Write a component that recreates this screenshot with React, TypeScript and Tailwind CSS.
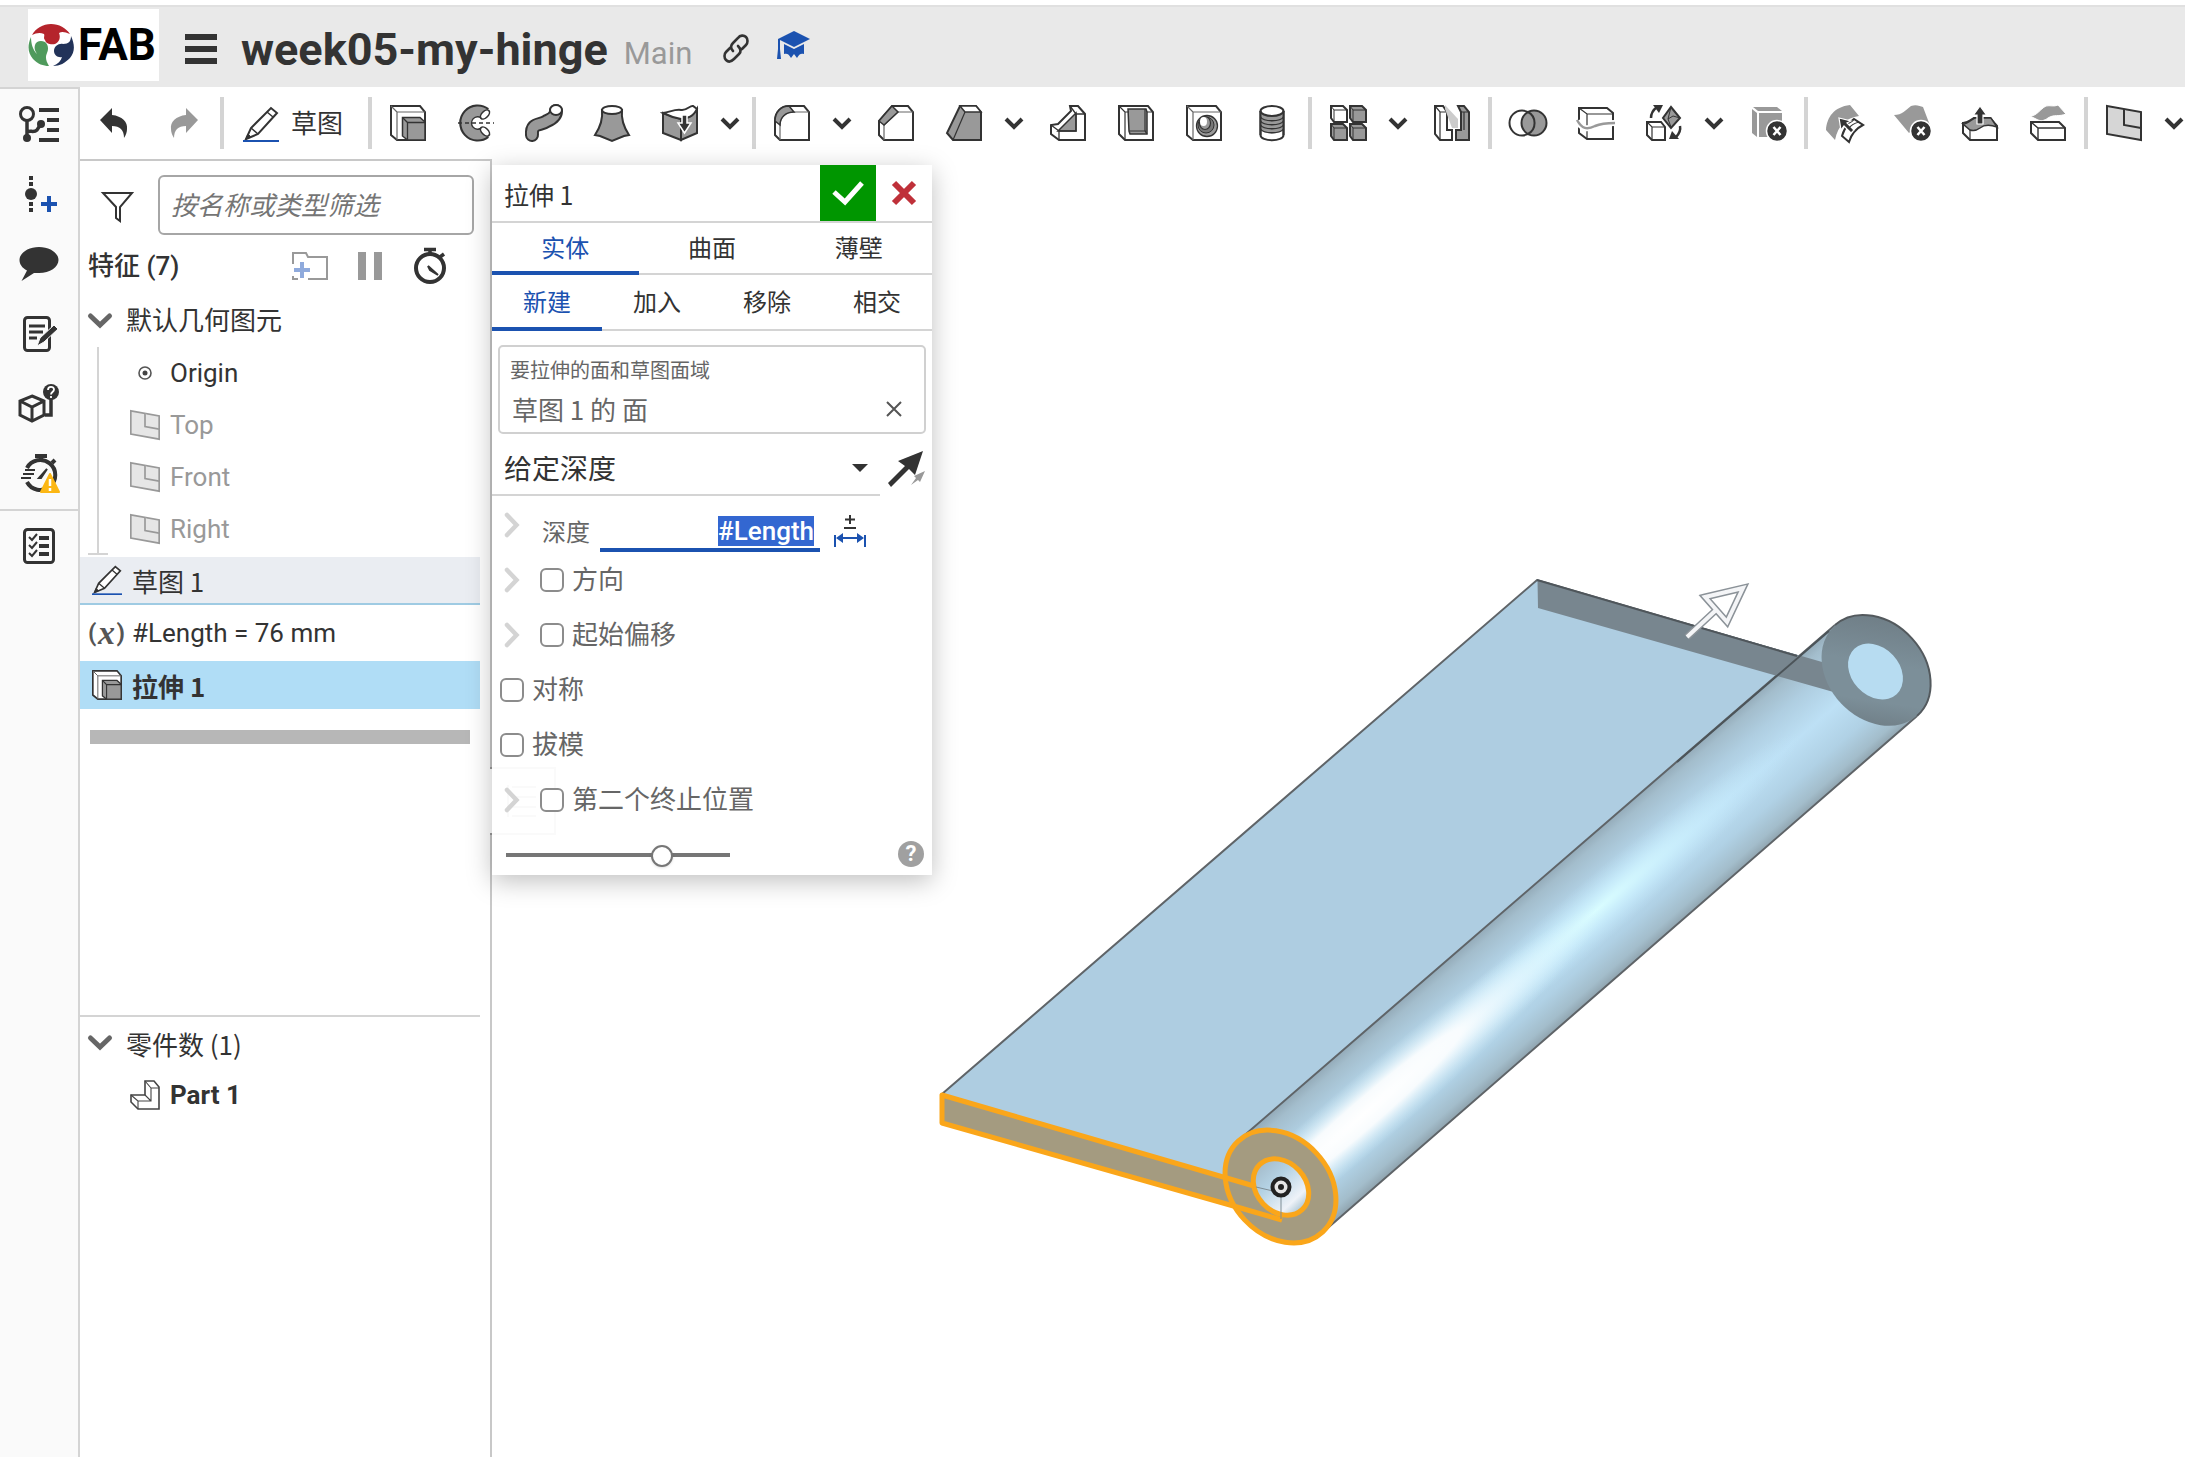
import React, { useEffect, useRef, useState } from 'react';

const DARK = '#333333';
const GREY = '#999999';
const BLUE = '#1b52b0';

interface IconProps {
  children: React.ReactNode;
  className?: string;
  box?: string;
}

const Icon = ({ children, className = 'h-9 w-9', box = '0 0 36 36' }: IconProps) => (
  <svg
    className={`shrink-0 overflow-visible ${className}`}
    viewBox={box}
    fill="none"
    stroke={DARK}
    strokeWidth={2}
    aria-hidden="true"
  >
    {children}
  </svg>
);

/* ---------- Toolbar icons ---------- */

const PencilIcon = ({ className }: { className?: string }) => (
  <Icon className={className}>
    <path d="M3 33 8 22 28 2l6 5-19 21z" fill="#fff" />
    <path d="m8 22 7 6M24 6l6 5" strokeWidth={1.5} />
    <path d="m3 33 5-2-3-3z" fill={DARK} strokeWidth={1} />
    <path d="M0 35h36" stroke={BLUE} />
  </Icon>
);

const ExtrudeIcon = ({ className }: { className?: string }) => (
  <Icon className={className}>
    <path d="M1 1h29l5 6v28H7l-6-5z" fill="#fff" />
    <path d="m1 1 6 6v28M7 7h28" stroke="#666" strokeWidth={1.2} />
    <path d="M12.500 12.500H30l5 4.500v18H17.500l-5-4z" fill={GREY} strokeWidth={1.5} />
    <path d="m12.500 12.500 5 5h17.500M17.500 17.500V35" strokeWidth={1.3} />
  </Icon>
);

const RevolveIcon = () => (
  <Icon>
    <path d="M27 8.500A12 12 0 1 0 27 27.500" stroke={DARK} strokeWidth={13} />
    <path d="M27.500 9A11.800 11.800 0 1 0 27.500 27" stroke={GREY} strokeWidth={9.500} />
    <ellipse cx="27" cy="9.500" rx="5.500" ry="3.200" fill="#fff" transform="rotate(-45 27 9.500)" strokeWidth={1.6} />
    <ellipse cx="27" cy="26.500" rx="5.500" ry="3.200" fill="#fff" transform="rotate(45 27 26.500)" strokeWidth={1.6} />
    <path d="M0 18h36" strokeWidth={1.6} strokeDasharray="4 3" />
  </Icon>
);

const SweepIcon = () => (
  <Icon>
    <path d="M6 30C5 17 14 21 21 16c7-3 9-6 9-10" stroke={DARK} strokeWidth={14} strokeLinecap="round" />
    <path d="M6 30C5 17 14 21 21 16c7-3 9-6 9-10" stroke={GREY} strokeWidth={10} strokeLinecap="round" />
    <ellipse cx="30" cy="5" rx="6" ry="5" fill="#fff" />
  </Icon>
);

const LoftIcon = () => (
  <Icon>
    <path d="M8 5c1 9-1 16-7 25l5 1 12 5 12-5 5-1c-6-9-8-16-7-25z" fill={GREY} />
    <ellipse cx="18" cy="5" rx="10" ry="4" fill="#fff" />
  </Icon>
);

const ThickenIcon = () => (
  <Icon>
    <path d="M1 8v20l18 7V14z" fill={GREY} />
    <path d="M19 14v21l16-7V4c-4 7-9 9-16 10z" fill={GREY} />
    <path d="M1 8C8 7 13 4 19 5s9-5 12-4l4 3c-4 8-9 9-16 10C13 13 7 11 1 8z" fill="#fff" />
    <path d="M20 10h5v8h4l-6.500 10L16 18h4z" fill={DARK} stroke="#fff" strokeWidth={1.5} />
  </Icon>
);

const FilletIcon = () => (
  <Icon>
    <path d="M1 16C1 7 7 1 15 1h15l5 6v28H6l-5-5z" fill="#fff" />
    <path d="M35 7H20C12 7 6 12 6 20v15" strokeWidth={1.2} stroke="#666" />
    <path d="M1 16C1 7 7 1 15 1l5 6C12 7 6 12 6 20z" fill={GREY} strokeWidth={1.5} />
  </Icon>
);

const ChamferIcon = () => (
  <Icon>
    <path d="M1 16 14 1h16l5 6v28H6l-5-5z" fill="#fff" />
    <path d="M35 7H20L6 20v15" strokeWidth={1.2} stroke="#666" />
    <path d="m1 16 13-15 6 6L6 20z" fill={GREY} strokeWidth={1.5} />
  </Icon>
);

const DraftIcon = () => (
  <Icon>
    <path d="M14 1h16l5 6v28H7l-6-7z" fill={GREY} />
    <path d="M14 1h16l5 6H19z" fill="#fff" strokeWidth={1.5} />
    <path d="M19 7 7 35" strokeWidth={1.2} />
  </Icon>
);

const RibIcon = () => (
  <Icon>
    <path d="M20 1h8l7 8v26H9l-8-6v-9l7-1 13-13z" fill="#fff" />
    <path d="M8 26 26 8v18z" fill={GREY} strokeWidth={1.5} />
    <path d="m20 1 6 8h9M26 9v17H9v9M9 26l-8-6" strokeWidth={1.3} />
  </Icon>
);

const ShellIcon = () => (
  <Icon>
    <path d="M1 1h29l5 6v28H7l-6-6z" fill="#fff" />
    <path d="M10 4h18l1 3v22H12l-1-3z" fill={GREY} strokeWidth={1.5} />
    <path d="m1 1 6 6v28M7 7h4M29 7h6M11 26h17M29 29l-2-3V4" strokeWidth={1.2} />
  </Icon>
);

const HoleIcon = () => (
  <Icon>
    <path d="M1 1h29l5 6v28H7l-6-5z" fill="#fff" />
    <path d="m1 1 6 6v28M7 7h28" stroke="#666" strokeWidth={1.2} />
    <circle cx="21" cy="21" r="10.500" fill={GREY} strokeWidth={1.3} />
    <circle cx="20" cy="20" r="8" fill="#777" strokeWidth={1} />
    <ellipse cx="19" cy="18" rx="5.500" ry="6.500" fill={GREY} strokeWidth={1.2} />
    <ellipse cx="17.500" cy="16.500" rx="3.500" ry="4.500" fill="#fff" stroke="none" />
  </Icon>
);

const ThreadIcon = () => (
  <Icon>
    <path d="M6.500 6v24c0 7 23 7 23 0V6" fill="#fff" />
    <path d="M6.500 8v16c3 6 20 6 23 0V8c-3 4-20 4-23 0z" fill={GREY} stroke="none" />
    <path d="M6.500 12c3 5 20 5 23 0M6.500 16c3 5 20 5 23 0M6.500 20c3 5 20 5 23 0M6.500 24c3 5 20 5 23 0" strokeWidth={1.4} />
    <ellipse cx="18" cy="6" rx="11.500" ry="5" fill="#fff" />
    <path d="M6.500 6v24M29.500 6v24" />
  </Icon>
);

const patternCells = [
  { x: 0, y: 0, fill: '#fff' },
  { x: 19, y: 0, fill: GREY },
  { x: 0, y: 18, fill: GREY },
  { x: 19, y: 18, fill: GREY },
];

const PatternIcon = () => (
  <Icon>
    {patternCells.map(({ x, y, fill }) => (
      <g key={`${x}-${y}`} transform={`translate(${x} ${y})`}>
        <path d="M1 1h12l4 4v12H4l-3-4z" fill={fill} strokeWidth={2} />
        <path d="m1 1 3 4v12M4 5h13" strokeWidth={1} />
      </g>
    ))}
  </Icon>
);

const MirrorIcon = () => (
  <Icon>
    <path d="M1 1h8l4 6v18h5v10H6l-5-6z" fill="#fff" />
    <path d="m1 1 5 6h7M6 7v28" strokeWidth={1.2} />
    <path d="M11 0v4l7 19h6V14z" fill="#ccc" stroke="none" />
    <path d="M24 1h6l5 6v28H22V25h5V7z" fill={GREY} />
    <path d="M27 7h8M30 7v18" strokeWidth={1.2} />
  </Icon>
);

const BooleanIcon = () => (
  <Icon>
    <circle cx="12" cy="18" r="12.500" fill="#fff" />
    <circle cx="24" cy="18" r="12.500" fill={GREY} />
    <path d="M18 7a12.500 12.500 0 0 1 0 22" />
  </Icon>
);

const SplitIcon = () => (
  <Icon>
    <path d="M1 3h28l6 5v26H9l-8-6z" fill="#fff" />
    <path d="m1 3 8 6h26M9 9v25" strokeWidth={1.2} />
    <path d="M-1 16c5 8 10 9 18 5 7-3 12-3 20-3" stroke="#fff" strokeWidth={6} />
    <path d="M-1 15c5 9 10 10 18 6 7-3 12-3 20-3" stroke={GREY} strokeWidth={2.5} />
  </Icon>
);

const TransformIcon = () => (
  <Icon>
    <path d="M1 17h14l4 5v13H6l-5-5z" fill="#fff" />
    <path d="m1 17 5 5h13M6 22v13" strokeWidth={1.2} />
    <path d="m25 2 9 11-9 10-8-10z" fill={GREY} />
    <path d="m25 2-3 12 3 8M22 14l5-3 7 2" strokeWidth={1} />
    <path d="M5 13c0-5 2-8 6-11M34 21c1 5-1 8-4 11" strokeWidth={2.5} />
    <path d="M7 0h10l-4 8zM23 34l3-8 7 8z" fill={DARK} stroke="none" />
  </Icon>
);

const CrossBadge = () => (
  <>
    <circle cx="27" cy="26" r="10.500" fill={DARK} stroke="#fff" strokeWidth={1.5} />
    <path d="m23.500 22 7 8M30.500 22l-7 8" stroke="#fff" strokeWidth={2.5} />
  </>
);

const DeleteSolidIcon = () => (
  <Icon>
    <path d="M3 2h24l5 4H8zM2 4l5 4v24l-5-4zM9 8h23v24H9z" fill={GREY} stroke="none" />
    <CrossBadge />
  </Icon>
);

const MoveFaceIcon = () => (
  <Icon>
    <path d="M0 25C1 12 8 2 24 0l9 11C20 13 12 20 9 35z" fill={GREY} stroke="none" />
    <path d="M16 20c6-1 9-3 12-6l9 6c-6 3-11 7-14 17l-7-6c1-4 3-8 6-11" fill="#fff" />
    <path d="m13 13 12 3-4 2 7 7-3 3-7-7-3 4z" fill={DARK} stroke="#fff" strokeWidth={1.2} />
    <path d="M22 24c3-4 7-6 11-7" strokeWidth={1.2} />
  </Icon>
);

const DeleteFaceIcon = () => (
  <Icon>
    <path d="M0 10C8 10 12 5 17 1c5-2 9 0 12 1l8 21-13-3-9 8z" fill={GREY} stroke="none" />
    <CrossBadge />
  </Icon>
);

const OffsetFaceIcon = () => (
  <Icon>
    <path d="M1 18c5 0 7-3 11-5h16l7 8v14H8l-7-7z" fill="#fff" />
    <path d="M1 19c5 0 9-5 12-6h16l6 9c-6-2-12-3-17 1-4 3-7 3-10 2z" fill={GREY} strokeWidth={1.5} />
    <path d="M8 25v10" strokeWidth={1.2} />
    <path d="M15 19V10h-3.500L18 1l6.500 9H21v9z" fill={DARK} stroke="#fff" strokeWidth={1.2} />
  </Icon>
);

const ReplaceFaceIcon = () => (
  <Icon>
    <path d="M1 17h28l6 6v12H8l-7-7z" fill="#fff" />
    <path d="m1 17 7 6h27M8 23v12" strokeWidth={1.4} />
    <path d="M0 11C7 11 10 4 16 1c4-1 8 1 12-1l8 9c-7 3-12 0-18 4-4 3-7 3-10 2z" fill={GREY} stroke="#fff" strokeWidth={1} />
  </Icon>
);

const PlaneIcon = ({ className, muted }: { className?: string; muted?: boolean }) => (
  <Icon className={className}>
    <g stroke={muted ? GREY : DARK} fill={muted ? '#e6e6e6' : '#d6d6d6'}>
      <path d="m1 1 34 6v28L1 29z" />
      <path d="M18 4v16l17 3" />
    </g>
  </Icon>
);

const UndoIcon = ({ flipped }: { flipped?: boolean }) => (
  <Icon className={flipped ? 'h-[30px] w-7 -scale-x-100' : 'h-[30px] w-7'} box="0 0 28 30">
    <path
      d="M0 12 12 0v7c10 1 16 7 15 14 0 3-1 6-3 9 0-8-4-12-12-12v7z"
      fill={flipped ? GREY : DARK}
      stroke="none"
    />
  </Icon>
);

const ChevronDown = () => (
  <Icon className="h-3 w-5" box="0 0 20 12">
    <path d="m2 2 8 8 8-8" strokeWidth={4} />
  </Icon>
);

/* ---------- Header ---------- */

const FabLogo = () => (
  <a href="#home" className="flex h-[72px] w-[131px] items-center gap-1 bg-white" aria-label="FAB">
    <svg className="h-[44px] w-[46px] shrink-0" viewBox="0 0 46 42" aria-hidden="true">
      <path d="M4 11C8 4 15 0 23 0s15 4 19 10c-5-2-8-3-11-1 2 5 0 9-4 11-4 1-9 0-10-4-2-2 0-4-1-6-4-2-8-1-12 1z" fill="#b5242c" />
      <path d="M3 13c-4 9-3 16 2 22 5 5 10 7 16 7-3-5-4-9-2-13 2-4 1-9-2-11-4-2-9-1-10 3s0 6 2 9c-4-4-6-10-6-17z" fill="#4f9a5c" />
      <path d="M43 12c4 9 4 16-1 22-5 5-10 8-17 8 5-2 8-5 9-9-4 1-8-2-8-6 0-5 5-8 9-7 6 0 8-3 8-8z" fill="#223359" />
    </svg>
    <span className="text-[44px] leading-none font-bold text-black">FAB</span>
  </a>
);

const Header = () => (
  <header className="mt-[5px] flex h-[82px] shrink-0 items-center border-t-2 border-[#e0e0e0] bg-[#e9e9e9] pb-1 pl-7">
    <FabLogo />
    <button type="button" aria-label="Menu" className="ml-[26px] flex w-8 flex-col gap-1.5 pt-2">
      <span className="h-1.5 bg-[#333]" />
      <span className="h-1.5 bg-[#333]" />
      <span className="h-1.5 bg-[#333]" />
    </button>
    <h1 className="ml-6 pt-2 text-[45px] leading-none font-bold text-[#333]">week05-my-hinge</h1>
    <span className="ml-4 pt-4 text-[31px] leading-none text-[#999]">Main</span>
    <button type="button" aria-label="Copy link" className="ml-7 pt-2">
      <Icon className="h-8 w-8" box="0 0 32 32">
        <path
          d="m13 18c-3-3-2-6 0-8l5-5c2-3 6-3 8-1s2 6 0 8l-4 4M18 13c3 3 3 6 1 8l-5 5c-3 3-6 3-8 1s-2-6 0-8l4-4"
          strokeWidth={2.6}
          strokeLinecap="round"
        />
      </Icon>
    </button>
    <button type="button" aria-label="Learning center" className="ml-6 pt-0.5">
      <Icon className="h-8 w-9" box="0 0 36 32">
        <g fill={BLUE} stroke="none">
          <path d="M18 1 34 9l-16 8L2 9zM8 14l10 5 10-5v10c-3-1-5 0-7 4l-3-4-3 4c-2-4-4-5-7-4z" />
          <path d="M2 9h2v10l1 10H1l1-10z" />
        </g>
      </Icon>
    </button>
  </header>
);

/* ---------- Left rail ---------- */

const railIcons: { label: string; icon: React.ReactNode }[] = [
  {
    label: 'Feature list',
    icon: (
      <>
        <circle cx="8" cy="10" r="6.500" strokeWidth={3} />
        <path d="M8 16v18M8 28c3-2 7 1 10-2l4-6" strokeWidth={3.5} />
        <circle cx="8" cy="34" r="4" fill={DARK} stroke="none" />
        <circle cx="22" cy="20" r="4" fill={DARK} stroke="none" />
        <path d="M20 6h20M28 16h12M28 26h12M20 36h20" strokeWidth={4} />
      </>
    ),
  },
  {
    label: 'Add version',
    icon: (
      <>
        <path d="M12 2v4M12 8v4M12 28v4M12 34v4" strokeWidth={4} />
        <circle cx="12" cy="20" r="6" fill={DARK} stroke="none" />
        <path d="M22 30h16M30 22v16" stroke={BLUE} strokeWidth={4} />
      </>
    ),
  },
  {
    label: 'Comments',
    icon: (
      <path
        d="M20 3c11 0 19.500 6 19.500 13S31 29 20 29h-5L2.500 37 8 26.500C3 24 .5 20 .5 16 .5 9 9 3 20 3z"
        fill={DARK}
        stroke="none"
      />
    ),
  },
  {
    label: 'Notes',
    icon: (
      <>
        <rect x="5.500" y="3.500" width="25" height="33" rx="3" strokeWidth={3} />
        <path d="M10 12h16M10 18h14M10 24h8" strokeWidth={3} />
        <path d="m18 32 3-8 14-13 4 4-14 13z" fill={DARK} stroke="#fafafa" strokeWidth={1} />
      </>
    ),
  },
  {
    label: 'Where used',
    icon: (
      <>
        <path d="m13 12 12 5v14l-12 6-12-6V17zM1 17l12 6 12-6M13 23v14" strokeWidth={3} />
        <path d="M32 15v16h-6" strokeWidth={3.5} />
        <circle cx="32" cy="8" r="8" fill={DARK} stroke="none" />
        <path d="M29 6c0-4 6-4 6-.5 0 2.500-3 2.500-3 5M32 12v2" stroke="#fff" strokeWidth={1.8} />
      </>
    ),
  },
  {
    label: 'Performance',
    icon: (
      <>
        <path d="M8 14a15 15 0 1 1 0 14" strokeWidth={4} />
        <path d="M16 2h12M22 2v5M33 9l3-3" strokeWidth={4} />
        <path d="m20 24 8-9-6 9z" fill={DARK} />
        <path d="M6 16h10M4 20h11M2 24h10" strokeWidth={2} />
        <path d="m31 20 9 18H22z" fill="#fcb714" stroke="#fcb714" strokeLinejoin="round" />
        <path d="M31 25v7M31 34v3" stroke="#fff" strokeWidth={2.5} />
      </>
    ),
  },
  {
    label: 'Tasks',
    icon: (
      <>
        <rect x="5.500" y="3.500" width="29" height="33" rx="3" strokeWidth={3} />
        <path d="M20 12h10M20 20h10M20 28h10" strokeWidth={4} />
        <path d="m10 11 3 3 5-6M10 19l3 3 5-6M10 27l3 3 5-6" strokeWidth={2} />
      </>
    ),
  },
];

const LeftRail = () => (
  <nav className="w-20 shrink-0 border-t-2 border-r-2 border-[#d4d4d4] bg-[#fafafa]">
    {railIcons.map(({ label, icon }, i) => (
      <button
        key={label}
        type="button"
        aria-label={label}
        className={
          i === railIcons.length - 1
            ? 'flex h-[72px] w-full items-center justify-center border-t-2 border-[#d4d4d4]'
            : 'flex h-[70px] w-full items-center justify-center'
        }
      >
        <Icon className="h-10 w-10" box="0 0 40 40">
          {icon}
        </Icon>
      </button>
    ))}
  </nav>
);

/* ---------- Toolbar ---------- */

const Separator = () => <span className="mx-0.5 h-[52px] w-1 shrink-0 bg-[#d4d4d4]" />;

const Tool = ({ label, children }: { label: string; children: React.ReactNode }) => (
  <button type="button" aria-label={label} className="flex h-full w-[68px] shrink-0 items-center justify-center">
    {children}
  </button>
);

const MoreButton = ({ label }: { label: string }) => (
  <button type="button" aria-label={label} className="mr-1 flex h-full w-8 shrink-0 items-center justify-center">
    <ChevronDown />
  </button>
);

const Toolbar = () => (
  <div role="toolbar" className="flex h-[72px] shrink-0 items-center overflow-hidden bg-white">
    <Tool label="Undo"><UndoIcon /></Tool>
    <span className="w-0.5 shrink-0" />
    <Tool label="Redo"><UndoIcon flipped /></Tool>
    <Separator />
    <button type="button" className="flex h-full w-[140px] shrink-0 items-center justify-center gap-3 pt-0.5 pr-1.5 text-[26px] text-[#333]">
      <PencilIcon />
      草图
    </button>
    <Separator />
    <Tool label="Extrude"><ExtrudeIcon /></Tool>
    <Tool label="Revolve"><RevolveIcon /></Tool>
    <Tool label="Sweep"><SweepIcon /></Tool>
    <Tool label="Loft"><LoftIcon /></Tool>
    <Tool label="Thicken"><ThickenIcon /></Tool>
    <MoreButton label="More solid tools" />
    <Separator />
    <Tool label="Fillet"><FilletIcon /></Tool>
    <MoreButton label="More fillet tools" />
    <Tool label="Chamfer"><ChamferIcon /></Tool>
    <Tool label="Draft"><DraftIcon /></Tool>
    <MoreButton label="More draft tools" />
    <Tool label="Rib"><RibIcon /></Tool>
    <Tool label="Shell"><ShellIcon /></Tool>
    <Tool label="Hole"><HoleIcon /></Tool>
    <Tool label="Thread"><ThreadIcon /></Tool>
    <Separator />
    <Tool label="Pattern"><PatternIcon /></Tool>
    <MoreButton label="More patterns" />
    <Tool label="Mirror"><MirrorIcon /></Tool>
    <Separator />
    <Tool label="Boolean"><BooleanIcon /></Tool>
    <Tool label="Split"><SplitIcon /></Tool>
    <Tool label="Transform"><TransformIcon /></Tool>
    <MoreButton label="More transforms" />
    <Tool label="Delete part"><DeleteSolidIcon /></Tool>
    <Separator />
    <Tool label="Move face"><MoveFaceIcon /></Tool>
    <Tool label="Delete face"><DeleteFaceIcon /></Tool>
    <Tool label="Offset face"><OffsetFaceIcon /></Tool>
    <Tool label="Replace face"><ReplaceFaceIcon /></Tool>
    <Separator />
    <Tool label="Plane"><PlaneIcon /></Tool>
    <MoreButton label="More planes" />
  </div>
);

/* ---------- Feature tree ---------- */

const TreeChevron = () => (
  <Icon className="h-4 w-6" box="0 0 24 16">
    <path d="m2.500 3 9.500 9 9.500-9" stroke="#666" strokeWidth={5} strokeLinecap="round" />
  </Icon>
);

const FeaturePanel = () => (
  <aside className="flex w-[412px] shrink-0 flex-col border-t-2 border-r-2 border-[#c8c8c8] bg-white pr-2.5 text-[26px] text-[#333]">
    <div className="mt-3.5 flex h-[60px] items-center pr-1.5 pl-[22px]">
      <button type="button" aria-label="Filter" className="pt-1">
        <Icon className="h-8 w-8" box="0 0 32 32">
          <path d="M1 2h29L18 16v14l-4-3V16z" />
        </Icon>
      </button>
      <input
        type="text"
        aria-label="按名称或类型筛选"
        placeholder="按名称或类型筛选"
        className="ml-6 h-full min-w-0 flex-1 rounded-md border-2 border-[#a6a6a6] pt-0.5 pl-[11px] placeholder:text-[#757575] placeholder:italic"
      />
    </div>

    <div className="flex h-[62px] items-center pl-2">
      <h2 className="flex-1 text-[26px] font-medium">特征 (7)</h2>
      <button type="button" aria-label="New folder" className="mr-[30px]">
        <Icon className="h-7 w-9" box="0 0 36 28">
          <path d="M1 12V1h13l2 4h19v22H16M6 27H1v-3" stroke={GREY} />
          <path d="M2 18h16M10 10v16" stroke="#8faadc" strokeWidth={4} />
        </Icon>
      </button>
      <button type="button" aria-label="Suspend" className="mr-8 flex gap-2">
        <span className="h-7 w-2 bg-[#999]" />
        <span className="h-7 w-2 bg-[#999]" />
      </button>
      <button type="button" aria-label="Regeneration times" className="mr-[34px]">
        <Icon className="h-9 w-8" box="0 0 32 36">
          <circle cx="16" cy="20" r="14" strokeWidth={4} />
          <path d="M10 1.500h12M16 2v5M26 9l4-3" strokeWidth={3.5} />
          <path d="m14 18 10 9-8-5z" fill={DARK} />
        </Icon>
      </button>
    </div>

    <ul className="flex flex-col gap-1">
      <li>
        <button type="button" className="flex h-12 items-center gap-3.5 pl-2" aria-expanded="true">
          <TreeChevron />
          默认几何图元
        </button>
      </li>
      <li className="flex">
        <span className="-mt-0.5 -mb-0.5 ml-2 flex w-5 flex-col items-center border-b-2 border-[#d4d4d4]">
          <span className="w-0.5 flex-1 bg-[#d4d4d4]" />
        </span>
        <ul className="flex flex-col gap-1 pl-[22px] text-[#999]">
          <li className="flex h-12 items-center gap-2.5 text-[#333]">
            <Icon className="h-[30px] w-[30px]" box="0 0 30 30">
              <circle cx="15" cy="15" r="6" stroke="#555" strokeWidth={1.6} />
              <circle cx="15" cy="15" r="2.500" fill="#444" stroke="none" />
            </Icon>
            Origin
          </li>
          {['Top', 'Front', 'Right'].map((plane) => (
            <li key={plane} className="flex h-12 items-center gap-2.5">
              <PlaneIcon muted className="h-[30px] w-[30px]" />
              {plane}
            </li>
          ))}
        </ul>
      </li>
      <li className="flex h-12 items-center gap-2.5 border-b-2 border-[#9fcbe3] bg-[#eaedf2] pl-3">
        <PencilIcon className="h-[30px] w-[30px]" />
        <span className="font-['Noto_Sans_CJK_SC',sans-serif]">草图 1</span>
      </li>
      <li className="flex h-12 items-center pl-2">
        <span className="flex w-11 items-center font-bold text-[#555]">
          <span className="text-2xl leading-none">(</span>
          <span className="w-5 text-center font-['Liberation_Serif',serif] text-[34px] leading-none italic">x</span>
          <span className="text-2xl leading-none">)</span>
        </span>
        #Length = 76 mm
      </li>
      <li className="flex h-12 items-center gap-2.5 bg-[#b0ddf6] pl-3 font-bold">
        <ExtrudeIcon className="h-[30px] w-[30px]" />
        <span className="font-['Noto_Sans_CJK_SC',sans-serif]">拉伸 1</span>
      </li>
    </ul>
    <div className="mt-[21px] mr-2.5 ml-2.5 h-3.5 shrink-0 bg-[#b7b7b7]" />

    <div className="mt-[271px] border-t-2 border-[#d4d4d4]">
      <button type="button" className="flex h-[52px] items-center gap-3.5 pl-2" aria-expanded="true">
        <TreeChevron />
        <span className="font-['Noto_Sans_CJK_SC',sans-serif]">零件数 (1)</span>
      </button>
      <div className="flex h-[52px] items-center gap-2.5 pl-[50px] font-bold">
        <Icon className="h-[30px] w-[30px]" box="0 0 30 30">
          <g stroke="#444" strokeWidth={1.6}>
            <path d="M1 15h14V1h9l5 6v22H8l-7-7z" fill="#fff" />
            <path d="m1 15 7 6v8M8 21h13V8h8M21 8l-6-7M15 15l6 6" strokeWidth={1.1} />
          </g>
        </Icon>
        Part 1
      </div>
    </div>
  </aside>
);

/* ---------- Extrude dialog ---------- */

interface TabsProps {
  items: string[];
  height: string;
}

const Tabs = ({ items, height }: TabsProps) => {
  const [active, setActive] = useState(0);
  return (
    <div role="tablist" className={`flex border-b-2 border-[#d4d4d4] ${height}`}>
      {items.map((item, i) => (
        <button
          key={item}
          type="button"
          role="tab"
          aria-selected={i === active}
          onClick={() => setActive(i)}
          className={
            i === active
              ? '-mb-0.5 flex-1 border-b-4 border-[#1b52b0] pt-1 text-[#1b52b0]'
              : 'flex-1 border-b-2 border-transparent pt-1'
          }
        >
          {item}
        </button>
      ))}
    </div>
  );
};

const ExpandButton = ({ label }: { label: string }) => (
  <button type="button" aria-label={label} className="mr-5">
    <Icon className="h-6 w-4" box="0 0 16 24">
      <path d="m3 2 9.500 10L3 22" stroke="#d4d4d4" strokeWidth={4.500} strokeLinecap="round" />
    </Icon>
  </button>
);

const CheckRow = ({ label, expandable }: { label: string; expandable?: boolean }) => (
  <div className={`flex h-[55px] items-center ${expandable ? 'pl-3' : 'pl-2'}`}>
    {expandable && <ExpandButton label={`展开 ${label}`} />}
    <label className="flex items-center gap-2">
      <input type="checkbox" className="h-6 w-6 appearance-none rounded-md border-2 border-[#8c8c8c] bg-white checked:bg-[#1b52b0]" />
      {label}
    </label>
  </div>
);

const ExtrudeDialog = () => {
  const depthRef = useRef<HTMLInputElement>(null);

  useEffect(() => {
    depthRef.current?.focus();
    depthRef.current?.select();
  }, []);

  return (
    <section
      aria-label="拉伸 1"
      className="absolute top-1.5 left-0 w-[440px] bg-white/95 pb-2 text-[26px] leading-none text-[#666] shadow-[0_6px_24px_rgba(0,0,0,0.25)]"
    >
      <div className="flex h-[58px] items-center border-b-2 border-[#d4d4d4] pl-3 text-[#333]">
        <h2 className="flex-1 pt-0.5 font-['Noto_Sans_CJK_SC',sans-serif] text-[25px] leading-none">拉伸 1</h2>
        <button type="button" aria-label="Accept" className="flex h-14 w-14 items-center justify-center bg-[#009600]">
          <Icon className="h-6 w-8" box="0 0 32 24">
            <path d="m2 11 11 10L30 2" stroke="#fff" strokeWidth={5} />
          </Icon>
        </button>
        <button type="button" aria-label="Cancel" className="flex h-14 w-14 items-center justify-center">
          <Icon className="h-6 w-6" box="0 0 24 24">
            <path d="m2 2 20 20M22 2 2 22" stroke="#bf3039" strokeWidth={6} />
          </Icon>
        </button>
      </div>

      <div className="text-2xl leading-none text-[#333]">
        <Tabs items={['实体', '曲面', '薄壁']} height="h-[52px]" />
        <Tabs items={['新建', '加入', '移除', '相交']} height="h-14" />
      </div>

      <div className="mx-1.5 mt-3.5 h-[89px] rounded-[5px] border-2 border-[#d0d0d0] pt-3.5 pl-2.5">
        <div className="text-[20px] leading-none">要拉伸的面和草图面域</div>
        <div className="mt-2.5 flex h-9 items-center pr-[22px] pl-0.5">
          <span className="flex-1 font-['Noto_Sans_CJK_SC',sans-serif]">草图 1 的 面</span>
          <button type="button" aria-label="Remove">
            <Icon className="h-4 w-4" box="0 0 16 16">
              <path d="m1 1 14 14M15 1 1 15" stroke="#555" />
            </Icon>
          </button>
        </div>
      </div>

      <div className="flex h-[62px] items-center">
        <span className="flex h-full w-[388px] items-center border-b-2 border-[#d4d4d4] pr-3 text-[28px] text-[#333]">
          <select aria-label="终止类型" className="h-full flex-1 appearance-none bg-transparent pt-3 pl-3 outline-none">
            <option>给定深度</option>
          </select>
          <Icon className="mt-2 h-2 w-4" box="0 0 16 8">
            <path d="M0 0h16L8 8z" fill={DARK} stroke="none" />
          </Icon>
        </span>
        <button type="button" aria-label="Flip direction" className="mt-2 ml-2">
          <Icon className="h-9 w-9" box="0 0 36 36">
            <path d="M35 0 27 24l-6-6L3 36l-3-4 17-17-7-5z" fill={DARK} stroke="none" />
            <path d="m37 20-5 11-2-2-7 5 5-7-2-2z" fill={GREY} stroke="none" />
          </Icon>
        </button>
      </div>

      <div className="flex h-[58px] items-center pl-3">
        <ExpandButton label="展开 深度" />
        <label htmlFor="depth" className="mt-4 w-[60px] pl-0.5 text-2xl leading-none">深度</label>
        <input
          id="depth"
          ref={depthRef}
          type="text"
          defaultValue="#Length"
          className="mt-3 h-[42px] w-[220px] border-b-4 border-[#1b52b0] pt-1 pr-1.5 text-right leading-[38px] font-medium text-[#333] outline-none selection:bg-[#3367d1] selection:text-white"
        />
        <button type="button" aria-label="Measure" className="mt-3 ml-3.5">
          <Icon className="h-8 w-8" box="0 0 32 32">
            <path d="M16 0v9M11 4.500h10M10 13h12" />
            <path d="M1 20v12M31 20v12M4 23h24" stroke={BLUE} />
            <path d="m2 23 7-5v10zM30 23l-7-5v10z" fill={BLUE} stroke="none" />
          </Icon>
        </button>
      </div>

      <div className="-mt-0.5">
        <CheckRow label="方向" expandable />
        <CheckRow label="起始偏移" expandable />
        <CheckRow label="对称" />
        <CheckRow label="拔模" />
        <CheckRow label="第二个终止位置" expandable />
      </div>

      <div className="flex h-10 items-end justify-between pr-2 pl-3.5">
        <input
          type="range"
          aria-label="Preview opacity"
          defaultValue={72}
          className="h-6 w-56 appearance-none bg-transparent [&::-webkit-slider-runnable-track]:h-1 [&::-webkit-slider-runnable-track]:bg-[#767676] [&::-webkit-slider-thumb]:-mt-2 [&::-webkit-slider-thumb]:h-[22px] [&::-webkit-slider-thumb]:w-[22px] [&::-webkit-slider-thumb]:appearance-none [&::-webkit-slider-thumb]:rounded-full [&::-webkit-slider-thumb]:border-2 [&::-webkit-slider-thumb]:border-[#767676] [&::-webkit-slider-thumb]:bg-white [&::-webkit-slider-thumb]:shadow"
        />
        <button
          type="button"
          aria-label="Help"
          className="flex h-[26px] w-[26px] items-center justify-center rounded-full bg-[#a0a0a0] text-[22px] leading-none font-bold text-white"
        >
          ?
        </button>
      </div>
    </section>
  );
};

/* ---------- Model ---------- */

const HingeModel = () => (
  <svg className="absolute inset-0 size-full" viewBox="492 159 1693 1298" fill="none" role="img" aria-label="Hinge leaf">
    <defs>
      <linearGradient id="tube" gradientUnits="userSpaceOnUse" x1="0" y1="-62" x2="0" y2="62">
        <stop offset="0" stopColor="#94abb9" />
        <stop offset="0.08" stopColor="#a3bdcc" />
        <stop offset="0.25" stopColor="#afcee1" />
        <stop offset="0.5" stopColor="#bde0f5" />
        <stop offset="0.75" stopColor="#b0d1e5" />
        <stop offset="0.92" stopColor="#a3bdcb" />
        <stop offset="1" stopColor="#90a4af" />
      </linearGradient>
      <radialGradient id="shine">
        <stop offset="0" stopColor="#fff" />
        <stop offset="0.4" stopColor="#fff" stopOpacity="0.9" />
        <stop offset="1" stopColor="#d8f4ff" stopOpacity="0" />
      </radialGradient>
      <radialGradient id="glow">
        <stop offset="0" stopColor="#d9fdff" />
        <stop offset="0.4" stopColor="#cdf2ff" stopOpacity="0.7" />
        <stop offset="1" stopColor="#c2e8fc" stopOpacity="0" />
      </radialGradient>
      <linearGradient id="endFace" x1="0" y1="0" x2="1" y2="1">
        <stop offset="0" stopColor="#6a777f" />
        <stop offset="0.45" stopColor="#7c8f99" />
        <stop offset="0.7" stopColor="#7c8f99" />
        <stop offset="1" stopColor="#67737a" />
      </linearGradient>
      <linearGradient id="bore" x1="0" y1="0" x2="1" y2="0">
        <stop offset="0" stopColor="#a5bccb" />
        <stop offset="0.35" stopColor="#b4d2e4" />
        <stop offset="0.8" stopColor="#eef2f8" />
        <stop offset="1" stopColor="#a9c4d3" />
      </linearGradient>
      <clipPath id="tubeClip">
        <path d="M1239 1140 1835 625A61 48 47 0 1 1917 716L1322 1233A62 49 47 0 1 1239 1140z" />
      </clipPath>
    </defs>

    {/* Leaf */}
    <path d="M942 1094 1537 580l298 86-595 526z" fill="#aecde1" />

    {/* Barrel */}
    <g clipPath="url(#tubeClip)">
      <g transform="translate(1280.500 1186.500) rotate(-40.900)">
        <rect x="-80" y="-64" width="960" height="128" fill="url(#tube)" />
        <ellipse cx="420" cy="-2" rx="270" ry="30" fill="url(#glow)" />
        <ellipse cx="110" cy="0" rx="320" ry="34" fill="url(#shine)" />
      </g>
    </g>
    <path d="M1239 1140 1835 625M1917 716L1322 1233" stroke="#5f6468" strokeWidth={2} />
    <path d="M942 1094 1537 580l260 76" stroke="#5f6468" strokeWidth={2} />

    {/* Far end face seen through the body */}
    <path d="m1537.500 580 288 83 20 40-12-11-295.500-84z" fill="#78868f" />
    <ellipse cx="1876" cy="670.500" rx="61" ry="48" transform="rotate(47 1876 670.500)" fill="url(#endFace)" stroke="none" />
    <path d="M1677 762 1829 631" stroke="#4c5459" strokeWidth={2} />
    <path d="m1537 580 260 76" stroke="#4f565b" strokeWidth={2} />
    <ellipse cx="1875.500" cy="671.500" rx="31" ry="24" transform="rotate(47 1875.500 671.500)" fill="#b7dcf1" />
    <path d="M1835 625A61 48 47 0 1 1917 716" stroke="#53595d" strokeWidth={2} />

    {/* Near end face */}
    <path d="m942 1095 283 82c8 10 8 20 12 30l-295-84z" fill="#a49b80" />
    <ellipse cx="1280.500" cy="1186.500" rx="62" ry="49" transform="rotate(47 1280.500 1186.500)" fill="#a49b80" stroke="#faa61a" strokeWidth={5} />
    <ellipse cx="1281" cy="1187" rx="31" ry="24.500" transform="rotate(47 1281 1187)" fill="url(#bore)" stroke="#faa61a" strokeWidth={5} />
    <path d="M1254 1186 942 1095v28l295 84 45 13" stroke="#faa61a" strokeWidth={5} strokeLinejoin="round" />
    <path d="m1256 1187 17 4M1281 1197v22" stroke="#7f8d95" />
    <circle cx="1281" cy="1187" r="8.500" fill="#e6e6e6" stroke="#222" strokeWidth={4} />
    <circle cx="1281" cy="1187" r="3" fill="#222" />

    {/* Direction arrow */}
    <path d="m1687 637 28-26M1705 597l38-9-16 34z" stroke="#8b9298" strokeWidth={7} />
    <path d="m1687 637 28-26M1705 597l38-9-16 34z" stroke="#f4f5f7" strokeWidth={4} />
  </svg>
);

export default function App() {
  return (
    <div className="flex min-h-screen flex-col overflow-hidden bg-white font-[Roboto,'Noto_Sans_CJK_SC',sans-serif]" lang="zh-CN">
      <Header />
      <div className="flex flex-1">
        <LeftRail />
        <div className="flex min-w-0 flex-1 flex-col">
          <Toolbar />
          <div className="flex flex-1">
            <FeaturePanel />
            <main className="relative min-w-0 flex-1">
              <HingeModel />
              <button
                type="button"
                aria-label="Feature tree"
                className="absolute top-[608px] -left-0.5 flex h-[68px] w-[66px] items-center justify-center border-2 border-l-0 border-[#999] bg-white"
              >
                <Icon className="h-8 w-8" box="0 0 32 32">
                  <path d="M2 0v32M6 2h24M10 12h20M6 22h24M6 31h24" stroke={GREY} />
                </Icon>
              </button>
              <ExtrudeDialog />
            </main>
          </div>
        </div>
      </div>
    </div>
  );
}
